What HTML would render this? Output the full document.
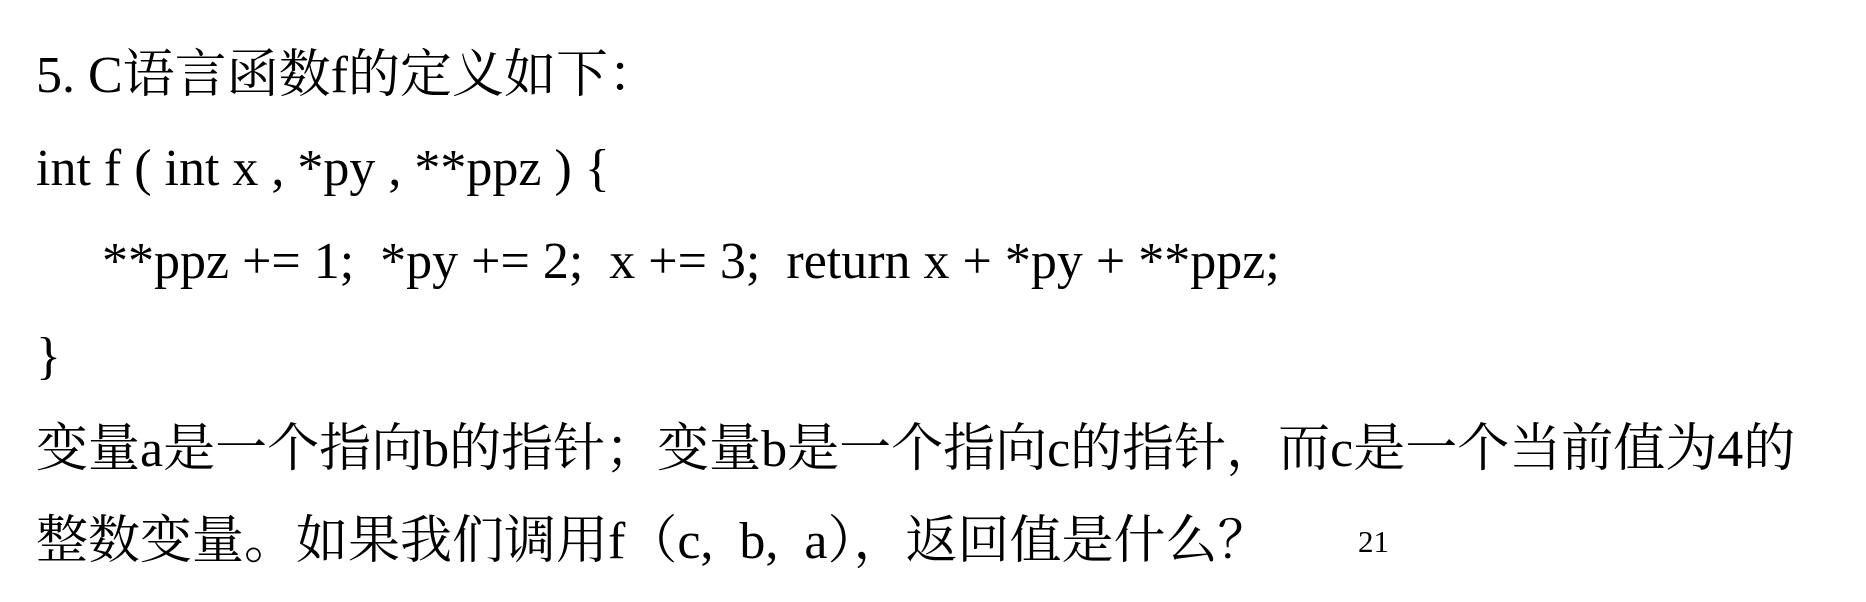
<!DOCTYPE html>
<html><head><meta charset="utf-8"><style>
html,body{margin:0;padding:0;background:#fff;width:1866px;height:602px;overflow:hidden}
.l{position:absolute;left:36px;font-family:"Liberation Serif","Noto Serif CJK SC",serif;font-size:52px;line-height:52px;color:#000;white-space:pre}
</style></head><body>
<div class="l" style="top:50px">5. C语言函数f的定义如下：</div>
<div class="l" style="top:143px">int f ( int x , *py , **ppz ) {</div>
<div class="l" style="top:236px;left:102px">**ppz += 1;  *py += 2;  x += 3;  return x + *py + **ppz;</div>
<div class="l" style="top:331px">}</div>
<div class="l" style="top:424px">变量a是一个指向b的指针；变量b是一个指向c的指针，而c是一个当前值为4的</div>
<div class="l" style="top:516px">整数变量。如果我们调用f（c,  b,  a），返回值是什么？</div>
<div class="l" style="top:526px;left:1358px;font-size:31px;line-height:31px">21</div>
</body></html>
